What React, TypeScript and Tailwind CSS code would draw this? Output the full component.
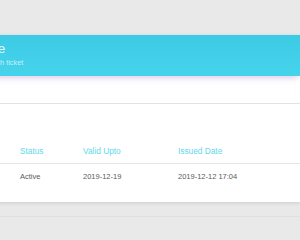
const rows = [
  { no: 'TK-1042', name: 'Monthly Pass', status: 'Active', validUpto: '2019-12-19', issued: '2019-12-12 17:04' },
];

export default function App() {
  return (
    <div className="h-[240px] w-[300px] overflow-hidden bg-[#e9e9e9] font-['Liberation_Sans',Arial,sans-serif]">
      <div className="pt-[35px]">
        <div className="ml-[-180px] w-[480px] bg-white shadow-[0_1px_4px_rgba(0,0,0,0.12)]">
          <div className="h-[41px] bg-gradient-to-b from-[#3dcae5] to-[#46d3ec] pt-[6px] pl-[114px] shadow-[0_4px_6px_-2px_rgba(160,110,200,0.35)]">
            <h4 className="text-[13.5px] leading-[16px] font-light text-white/85">Ticket Table</h4>
            <p className="mt-[1px] text-[7.3px] leading-[10px] font-light text-white/70">Listing details of each ticket</p>
          </div>
          <div className="h-[28px] border-b border-[#e2e2e2]" />
          <table className="mt-[41px] w-full text-left">
            <thead>
              <tr className="border-b border-[#e6e6e6] text-[8.3px] text-[#62d8ec]">
                <th className="h-[18px] w-[120px] pl-[20px] align-top font-normal">Ticket No</th>
                <th className="w-[80px] align-top font-normal">Name</th>
                <th className="w-[63px] align-top font-normal">Status</th>
                <th className="w-[95px] align-top font-normal">Valid Upto</th>
                <th className="align-top font-normal">Issued Date</th>
              </tr>
            </thead>
            <tbody className="text-[7.5px] text-[#5a5a5a]">
              {rows.map((r) => (
                <tr key={r.no}>
                  <td className="h-[39px] pl-[20px] pt-[7px] align-top">{r.no}</td>
                  <td className="pt-[7px] align-top">{r.name}</td>
                  <td className="pt-[7px] align-top">{r.status}</td>
                  <td className="pt-[7px] align-top">{r.validUpto}</td>
                  <td className="pt-[7px] align-top">{r.issued}</td>
                </tr>
              ))}
            </tbody>
          </table>
        </div>
        <div className="mt-[14px] border-b border-[#e0e0e0]" />
      </div>
    </div>
  );
}
